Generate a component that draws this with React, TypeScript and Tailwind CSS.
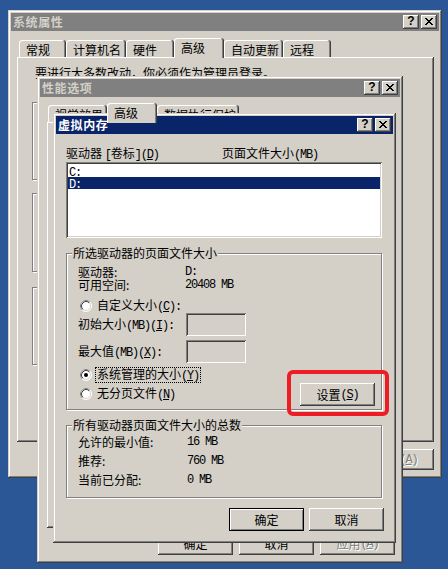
import React from "react";

const FONT = "font-['Noto_Sans_CJK_SC','Noto_Sans_CJK_JP',sans-serif]";
const FRAME =
  "shadow-[inset_-1px_-1px_#404040,inset_1px_1px_#d4d0c8,inset_-2px_-2px_#808080,inset_2px_2px_#ffffff]";
const RAISED =
  "shadow-[inset_-1px_-1px_#404040,inset_1px_1px_#ffffff,inset_-2px_-2px_#808080,inset_2px_2px_#d4d0c8]";
const SUNKEN =
  "shadow-[inset_1px_1px_#808080,inset_-1px_-1px_#ffffff,inset_2px_2px_#404040,inset_-2px_-2px_#d4d0c8]";
const PANEL = "shadow-[inset_-1px_-1px_#404040,inset_1px_1px_#ffffff,inset_-2px_-2px_#808080]";
const ETCHED = "border border-[#808080] shadow-[inset_1px_1px_#ffffff,1px_1px_#ffffff]";

// half-width latin runs (SimSun style, ~6px per char)
function L({ children }: { children: React.ReactNode }) {
  return (
    <span className="font-['Liberation_Mono',monospace] text-[12px] tracking-[-1.2px]">{children}</span>
  );
}

const X_PIX = [
  [0, 0, 2], [6, 0, 2], [1, 1, 2], [5, 1, 2], [2, 2, 4], [3, 3, 2],
  [2, 4, 4], [1, 5, 2], [5, 5, 2], [0, 6, 2], [6, 6, 2],
];

function CloseGlyph() {
  return (
    <svg width="8" height="7" viewBox="0 0 8 7" shapeRendering="crispEdges">
      {X_PIX.map(([x, y, w], i) => (
        <rect key={i} x={x} y={y} width={w} height={1} fill="#000" />
      ))}
    </svg>
  );
}

function CapBtn({ children }: { children: React.ReactNode }) {
  return (
    <div className={`w-[16px] h-[14px] pb-[1px] bg-[#d4d0c8] flex items-center justify-center ${RAISED}`}>
      {children}
    </div>
  );
}

function TitleBar({ title, active }: { title: string; active?: boolean }) {
  return (
    <div
      className={`h-[18px] flex items-center px-[2px] ${
        active ? "bg-[#0a246a] text-white" : "bg-[#808080] text-[#d4d0c8]"
      }`}
    >
      <span className="font-bold text-[12px] leading-[14px] tracking-[0.6px]">{title}</span>
      <div className="ml-auto flex gap-[2px]">
        <CapBtn>
          <span className="font-['Liberation_Sans',sans-serif] font-bold text-[12px] leading-[11px] text-black">?</span>
        </CapBtn>
        <CapBtn>
          <CloseGlyph />
        </CapBtn>
      </div>
    </div>
  );
}

function Tab({ children, className, sel }: { children: React.ReactNode; className: string; sel?: boolean }) {
  return (
    <div
      className={`${className} rounded-t-[3px] bg-[#d4d0c8] pl-[7px] pt-[4px] whitespace-nowrap overflow-hidden shadow-[inset_-1px_0_#404040,inset_1px_1px_#ffffff,inset_-2px_0_#808080] ${
        sel ? "relative z-10 h-[20px] -mb-[1px]" : "h-[17px]"
      }`}
    >
      {children}
    </div>
  );
}

function Btn({
  children,
  def,
  disabled,
  className = "h-[23px]",
}: {
  children: React.ReactNode;
  def?: boolean;
  disabled?: boolean;
  className?: string;
}) {
  return (
    <div
      className={`w-[75px] bg-[#d4d0c8] flex items-center justify-center ${className} ${
        def ? "border border-black shadow-[inset_1px_1px_#ffffff,inset_-1px_-1px_#808080]" : RAISED
      } ${disabled ? "text-[#808080] [text-shadow:1px_1px_0_#ffffff]" : "text-black"}`}
    >
      {children}
    </div>
  );
}

function Radio({ checked }: { checked?: boolean }) {
  return (
    <svg width="12" height="12" viewBox="0 0 12 12" className="shrink-0">
      <circle cx="6" cy="6" r="5.5" fill="#ffffff" stroke="#ffffff" />
      <path d="M2.11 9.89 A5.5 5.5 0 0 1 9.89 2.11" fill="none" stroke="#808080" />
      <circle cx="6" cy="6" r="4.5" fill="none" stroke="#d4d0c8" />
      <path d="M2.82 9.18 A4.5 4.5 0 0 1 9.18 2.82" fill="none" stroke="#404040" />
      {checked && <circle cx="6" cy="6" r="2" fill="#000" />}
    </svg>
  );
}

function RadioRow({ children, checked, focus }: { children: React.ReactNode; checked?: boolean; focus?: boolean }) {
  return (
    <div className="flex items-center h-[12px] pl-[2px]">
      <Radio checked={checked} />
      <span
        className={`ml-[3px] px-[1px] border leading-[12px] ${
          focus ? "border-dotted border-black" : "border-transparent"
        }`}
      >
        {children}
      </span>
    </div>
  );
}

function GroupBox({ label, className, children }: { label: string; className: string; children: React.ReactNode }) {
  return (
    <div className={`relative ml-[10px] w-[316px] ${ETCHED} ${className}`}>
      <span className="absolute left-[5px] -top-[7px] bg-[#d4d0c8] px-[1px] leading-[12px]">{label}</span>
      {children}
    </div>
  );
}

export default function App() {
  return (
    <div className={`relative w-[448px] h-[569px] overflow-hidden bg-[#2b5796] text-[12px] leading-[12px] text-black ${FONT}`}>
      {/* 系统属性 */}
      <div className={`absolute left-[8px] top-[10px] w-[434px] h-[468px] bg-[#d4d0c8] p-[3px] ${FRAME}`}>
        <TitleBar title="系统属性" />
        <div className="mt-[7px] h-[19px] flex items-end pl-[8px]">
          <Tab className="w-[47px]">常规</Tab>
          <Tab className="w-[60px]">计算机名</Tab>
          <Tab className="w-[48px]">硬件</Tab>
          <Tab className="w-[50px]" sel>
            高级
          </Tab>
          <Tab className="w-[59px]">自动更新</Tab>
          <Tab className="w-[48px]">远程</Tab>
        </div>
        <div className={`ml-[6px] w-[417px] h-[385px] pl-[15px] pt-[10px] ${PANEL}`}>
          <div className="pl-[3px]">要进行大多数改动，你必须作为管理员登录。</div>
          <div className={`mt-[23px] w-[360px] h-[78px] ${ETCHED}`} />
          <div className={`mt-[13px] w-[360px] h-[79px] ${ETCHED}`} />
          <div className={`mt-[15px] w-[360px] h-[78px] ${ETCHED}`} />
        </div>
        <div className="mt-[7px] flex justify-end gap-[6px] pr-[5px]">
          <Btn className="h-[21px]">确定</Btn>
          <Btn className="h-[21px]">取消</Btn>
          <Btn className="h-[21px]" disabled>
            应用<L>(<u>A</u>)</L>
          </Btn>
        </div>
      </div>

      {/* 性能选项 */}
      <div className={`absolute left-[37px] top-[76px] w-[366px] h-[487px] bg-[#d4d0c8] p-[3px] ${FRAME}`}>
        <TitleBar title="性能选项" />
        <div className="mt-[6px] h-[19px] flex items-end pl-[8px]">
          <Tab className="w-[59px]">视觉效果</Tab>
          <Tab className="w-[50px]" sel>
            高级
          </Tab>
          <Tab className="w-[82px]">数据执行保护</Tab>
        </div>
        <div className={`ml-[7px] w-[348px] h-[406px] ${PANEL}`} />
        <div className="mt-[4px] flex justify-end gap-[6px] pr-[5px]">
          <Btn>确定</Btn>
          <Btn>取消</Btn>
          <Btn disabled>
            应用<L>(<u>A</u>)</L>
          </Btn>
        </div>
      </div>

      {/* 虚拟内存 */}
      <div className={`absolute left-[53px] top-[113px] w-[343px] h-[430px] bg-[#d4d0c8] p-[3px] ${FRAME}`}>
        <TitleBar title="虚拟内存" active />
        <div className="mt-[13px] pl-[10px] flex h-[12px]">
          <span className="w-[156px]">
            驱动器 <L>[</L>卷标<L>]</L>
            <L>
              (<u>D</u>)
            </L>
          </span>
          <span>
            页面文件大小<L>(MB)</L>
          </span>
        </div>
        <div className={`ml-[10px] mt-[3px] w-[316px] h-[76px] bg-white p-[2px] ${SUNKEN}`}>
          <div className="mt-[1px] h-[12px] pl-[1px] leading-[12px]">
            <L>C:</L>
          </div>
          <div className="h-[12px] pl-[1px] leading-[12px] bg-[#0a246a] text-white">
            <L>D:</L>
          </div>
        </div>

        <GroupBox label="所选驱动器的页面文件大小" className="mt-[15px] h-[157px]">
          <div className="pl-[11px] pt-[12px]">
            <div className="flex h-[12px]">
              <span className="w-[107px]">驱动器:</span>
              <L>D:</L>
            </div>
            <div className="flex h-[12px] mt-[1px]">
              <span className="w-[107px]">可用空间:</span>
              <L>20408 MB</L>
            </div>
            <div className="mt-[9px]">
              <RadioRow>
                自定义大小<L>(<u>C</u>):</L>
              </RadioRow>
            </div>
            <div className="mt-[1px] flex items-center h-[23px]">
              <span className="w-[108px]">
                初始大小<L>(MB)(<u>I</u>):</L>
              </span>
              <div className={`w-[60px] h-[23px] bg-[#d4d0c8] ${SUNKEN}`} />
            </div>
            <div className="mt-[4px] flex items-center h-[23px]">
              <span className="w-[108px]">
                最大值<L>(MB)(<u>X</u>):</L>
              </span>
              <div className={`w-[60px] h-[23px] bg-[#d4d0c8] ${SUNKEN}`} />
            </div>
            <div className="flex">
              <div className="flex flex-col">
                <div className="mt-[6px]">
                  <RadioRow checked focus>
                    系统管理的大小<L>(<u>Y</u>)</L>
                  </RadioRow>
                </div>
                <div className="mt-[7px]">
                  <RadioRow>
                    无分页文件<L>(<u>N</u>)</L>
                  </RadioRow>
                </div>
              </div>
              <div className="ml-auto mr-[6px] mt-[20px]">
                <Btn>
                  设置<L>(<u>S</u>)</L>
                </Btn>
              </div>
            </div>
          </div>
          <div className="absolute left-[220px] top-[116px] w-[102px] h-[46px] rounded-[6px] border-[4px] border-[#ee1c25] z-20" />
        </GroupBox>

        <GroupBox label="所有驱动器页面文件大小的总数" className="mt-[15px] h-[73px]">
          <div className="pl-[11px] pt-[10px] flex flex-col gap-[7px]">
            <div className="flex h-[12px]">
              <span className="w-[109px]">允许的最小值:</span>
              <L>16 MB</L>
            </div>
            <div className="flex h-[12px]">
              <span className="w-[109px]">推荐:</span>
              <L>760 MB</L>
            </div>
            <div className="flex h-[12px]">
              <span className="w-[109px]">当前已分配:</span>
              <L>0 MB</L>
            </div>
          </div>
        </GroupBox>

        <div className="mt-[10px] flex justify-end gap-[5px] pr-[9px]">
          <Btn def>确定</Btn>
          <Btn>取消</Btn>
        </div>
      </div>
    </div>
  );
}
